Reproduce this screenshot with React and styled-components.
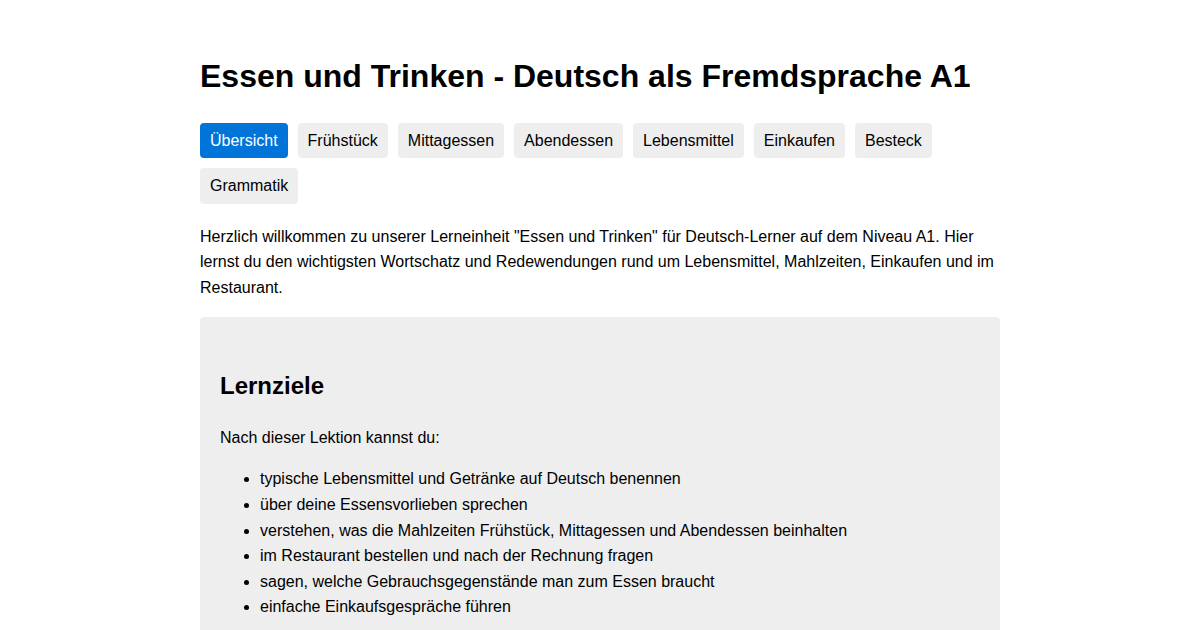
import React, { useState } from "react";
import styled, { createGlobalStyle } from "styled-components";

const GlobalStyle = createGlobalStyle`
  body {
    margin: 8px;
    background: #fff;
    color: #000;
    font-family: "Liberation Sans", Arial, sans-serif;
    line-height: 1.6;
  }
`;

const Page = styled.div`
  max-width: 800px;
  margin: 0 auto;
  padding: 20px;
`;

const Title = styled.h1`
  font-size: 32px;
  font-weight: bold;
  margin: 23.44px 0 20.44px;
`;

const Tabs = styled.nav`
  display: flex;
  flex-wrap: wrap;
  gap: 10px;
  margin-bottom: 20px;
`;

const Tab = styled.button`
  border: none;
  border-radius: 4px;
  padding: 8px 10px;
  font-family: "Liberation Sans", Arial, sans-serif;
  font-size: 16px;
  line-height: 19.4px;
  cursor: pointer;
  background: ${(p) => (p.$active ? "#0074d9" : "#eee")};
  color: ${(p) => (p.$active ? "#fff" : "#000")};
`;

const Intro = styled.p`
  font-size: 16px;
  margin: 16px 0;
`;

const Section = styled.section`
  background: #eee;
  border-radius: 4px;
  padding: 30px 20px;
`;

const SectionTitle = styled.h2`
  font-size: 24px;
  font-weight: bold;
  margin: 19.92px 0;
`;

const Text = styled.p`
  margin: 16px 0;
`;

const List = styled.ul`
  margin: 16px 0;
  padding-left: 40px;
`;

const tabs = [
  "Übersicht",
  "Frühstück",
  "Mittagessen",
  "Abendessen",
  "Lebensmittel",
  "Einkaufen",
  "Besteck",
  "Grammatik",
];

const goals = [
  "typische Lebensmittel und Getränke auf Deutsch benennen",
  "über deine Essensvorlieben sprechen",
  "verstehen, was die Mahlzeiten Frühstück, Mittagessen und Abendessen beinhalten",
  "im Restaurant bestellen und nach der Rechnung fragen",
  "sagen, welche Gebrauchsgegenstände man zum Essen braucht",
  "einfache Einkaufsgespräche führen",
];

export default function App() {
  const [active, setActive] = useState(0);
  return (
    <>
      <GlobalStyle />
      <Page>
        <Title>Essen und Trinken - Deutsch als Fremdsprache A1</Title>
        <Tabs>
          {tabs.map((t, i) => (
            <Tab key={t} $active={i === active} onClick={() => setActive(i)}>
              {t}
            </Tab>
          ))}
        </Tabs>
        <Intro>
          Herzlich willkommen zu unserer Lerneinheit "Essen und Trinken" für
          Deutsch-Lerner auf dem Niveau A1. Hier lernst du den wichtigsten
          Wortschatz und Redewendungen rund um Lebensmittel, Mahlzeiten,
          Einkaufen und im Restaurant.
        </Intro>
        <Section>
          <SectionTitle>Lernziele</SectionTitle>
          <Text>Nach dieser Lektion kannst du:</Text>
          <List>
            {goals.map((g) => (
              <li key={g}>{g}</li>
            ))}
          </List>
        </Section>
      </Page>
    </>
  );
}
